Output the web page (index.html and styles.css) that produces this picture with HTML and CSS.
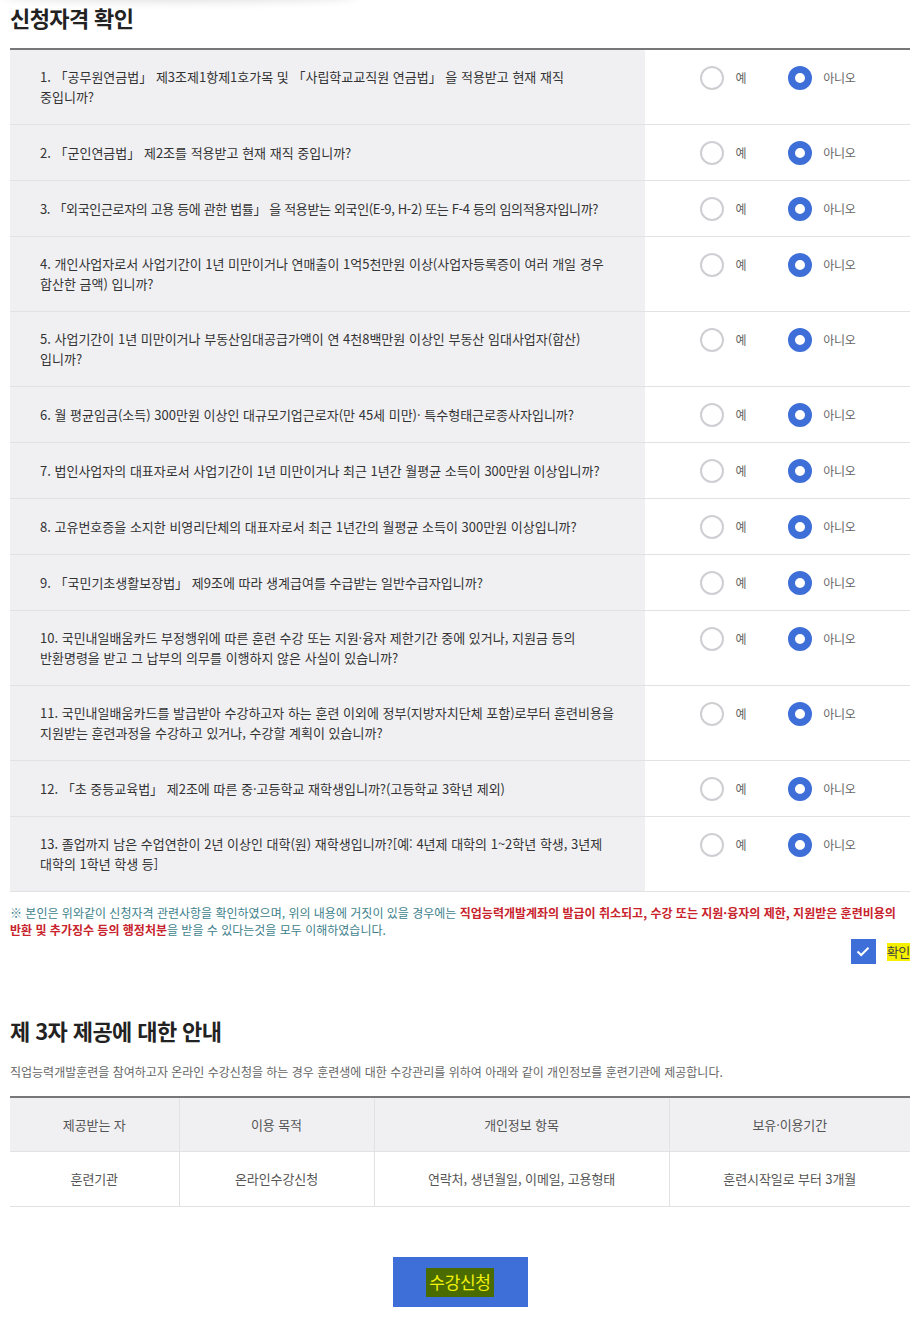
FILE: index.html
```html
<!DOCTYPE html>
<html lang="ko">
<head>
<meta charset="utf-8">
<link rel="stylesheet" href="styles.css">
</head>
<body>
<div class="page">
  <div class="topshadow"></div>
  <h2 class="title">신청자격 확인</h2>
  <div class="qtable">
    <div class="qrow"><div class="q">1. 「공무원연금법」 제3조제1항제1호가목 및 「사립학교교직원 연금법」 을 적용받고 현재 재직 중입니까?</div><div class="a"><span class="radio"></span><span class="lbl">예</span><span class="radio on"></span><span class="lbl">아니오</span></div></div>
    <div class="qrow"><div class="q">2. 「군인연금법」 제2조를 적용받고 현재 재직 중입니까?</div><div class="a"><span class="radio"></span><span class="lbl">예</span><span class="radio on"></span><span class="lbl">아니오</span></div></div>
    <div class="qrow"><div class="q tight">3. 「외국인근로자의 고용 등에 관한 법률」 을 적용받는 외국인(E-9, H-2) 또는 F-4 등의 임의적용자입니까?</div><div class="a"><span class="radio"></span><span class="lbl">예</span><span class="radio on"></span><span class="lbl">아니오</span></div></div>
    <div class="qrow"><div class="q">4. 개인사업자로서 사업기간이 1년 미만이거나 연매출이 1억5천만원 이상(사업자등록증이 여러 개일 경우 합산한 금액) 입니까?</div><div class="a"><span class="radio"></span><span class="lbl">예</span><span class="radio on"></span><span class="lbl">아니오</span></div></div>
    <div class="qrow"><div class="q">5. 사업기간이 1년 미만이거나 부동산임대공급가액이 연 4천8백만원 이상인 부동산 임대사업자(합산) 입니까?</div><div class="a"><span class="radio"></span><span class="lbl">예</span><span class="radio on"></span><span class="lbl">아니오</span></div></div>
    <div class="qrow"><div class="q">6. 월 평균임금(소득) 300만원 이상인 대규모기업근로자(만 45세 미만)· 특수형태근로종사자입니까?</div><div class="a"><span class="radio"></span><span class="lbl">예</span><span class="radio on"></span><span class="lbl">아니오</span></div></div>
    <div class="qrow"><div class="q">7. 법인사업자의 대표자로서 사업기간이 1년 미만이거나 최근 1년간 월평균 소득이 300만원 이상입니까?</div><div class="a"><span class="radio"></span><span class="lbl">예</span><span class="radio on"></span><span class="lbl">아니오</span></div></div>
    <div class="qrow"><div class="q">8. 고유번호증을 소지한 비영리단체의 대표자로서 최근 1년간의 월평균 소득이 300만원 이상입니까?</div><div class="a"><span class="radio"></span><span class="lbl">예</span><span class="radio on"></span><span class="lbl">아니오</span></div></div>
    <div class="qrow"><div class="q">9. 「국민기초생활보장법」 제9조에 따라 생계급여를 수급받는 일반수급자입니까?</div><div class="a"><span class="radio"></span><span class="lbl">예</span><span class="radio on"></span><span class="lbl">아니오</span></div></div>
    <div class="qrow"><div class="q">10. 국민내일배움카드 부정행위에 따른 훈련 수강 또는 지원·융자 제한기간 중에 있거나, 지원금 등의 반환명령을 받고 그 납부의 의무를 이행하지 않은 사실이 있습니까?</div><div class="a"><span class="radio"></span><span class="lbl">예</span><span class="radio on"></span><span class="lbl">아니오</span></div></div>
    <div class="qrow"><div class="q">11. 국민내일배움카드를 발급받아 수강하고자 하는 훈련 이외에 정부(지방자치단체 포함)로부터 훈련비용을 지원받는 훈련과정을 수강하고 있거나, 수강할 계획이 있습니까?</div><div class="a"><span class="radio"></span><span class="lbl">예</span><span class="radio on"></span><span class="lbl">아니오</span></div></div>
    <div class="qrow"><div class="q">12. 「초 중등교육법」 제2조에 따른 중·고등학교 재학생입니까?(고등학교 3학년 제외)</div><div class="a"><span class="radio"></span><span class="lbl">예</span><span class="radio on"></span><span class="lbl">아니오</span></div></div>
    <div class="qrow"><div class="q">13. 졸업까지 남은 수업연한이 2년 이상인 대학(원) 재학생입니까?[예: 4년제 대학의 1~2학년 학생, 3년제 대학의 1학년 학생 등]</div><div class="a"><span class="radio"></span><span class="lbl">예</span><span class="radio on"></span><span class="lbl">아니오</span></div></div>
  </div>
  <p class="notice">※ 본인은 위와같이 신청자격 관련사항을 확인하였으며, 위의 내용에 거짓이 있을 경우에는 <b>직업능력개발계좌의 발급이 취소되고, 수강 또는 지원·융자의 제한, 지원받은 훈련비용의 반환 및 추가징수 등의 행정처분</b>을 받을 수 있다는것을 모두 이해하였습니다.</p>
  <div class="confirm">
    <span class="check"><svg width="14" height="11" viewBox="0 0 14 11"><path d="M1.5 5.5 L5.2 9 L12.5 1.8" fill="none" stroke="#fff" stroke-width="2"/></svg></span>
    <span class="confirm-lbl">확인</span>
  </div>

  <h2 class="title title2">제 3자 제공에 대한 안내</h2>
  <p class="desc">직업능력개발훈련을 참여하고자 온라인 수강신청을 하는 경우 훈련생에 대한 수강관리를 위하여 아래와 같이 개인정보를 훈련기관에 제공합니다.</p>
  <table class="ptable">
    <colgroup><col class="c1"><col class="c2"><col class="c3"><col class="c4"></colgroup>
    <thead><tr><th>제공받는 자</th><th>이용 목적</th><th>개인정보 항목</th><th>보유·이용기간</th></tr></thead>
    <tbody><tr><td>훈련기관</td><td>온라인수강신청</td><td>연락처, 생년월일, 이메일, 고용형태</td><td>훈련시작일로 부터 3개월</td></tr></tbody>
  </table>
  <div class="btnwrap"><button class="submit"><span class="hl">수강신청</span></button></div>
</div>
</body>
</html>
```

FILE: styles.css
```css
* { box-sizing: border-box; }
html, body { margin: 0; padding: 0; background: #fff; }
body {
  font-family: "Noto Sans CJK KR", "Noto Sans", sans-serif;
  color: #333;
  word-break: keep-all;
}
.page {
  position: relative;
  padding: 0 9px 0 10px;
  width: 919px;
}
.topshadow {
  position: absolute;
  left: 0; top: -14px;
  width: 360px; height: 14px;
  border-radius: 50%;
  box-shadow: 0 2px 10px rgba(0,0,0,0.12);
}
.title {
  margin: 0;
  padding-top: 3px;
  height: 48px;
  font-size: 22px;
  font-weight: 700;
  letter-spacing: -0.6px;
  color: #222;
  line-height: 28px;
}
.qtable {
  border-top: 2px solid #777;
}
.qrow {
  display: flex;
  border-bottom: 1px solid #e2e2e2;
}
.qrow .q {
  width: 635px;
  background: #f0f0f3;
  padding: 17px 26px 17px 30px;
  font-size: 13px;
  line-height: 20px;
  letter-spacing: 0;
  color: #333;
  min-height: 55px;
  display: flex;
  align-items: center;
}
.qrow .q.tight { letter-spacing: -0.35px; }
.qrow .a {
  flex: 1;
  display: flex;
  align-items: flex-start;
  justify-content: center;
  padding-top: 16px;
}
.radio {
  width: 24px; height: 24px;
  border-radius: 50%;
  border: 2.5px solid #cfcfd3;
  flex: none;
}
.radio.on {
  border: 7px solid #3e6fd9;
  background: #fff;
}
.lbl {
  font-size: 12px;
  color: #666;
  line-height: 24px;
  margin-left: 12px;
  margin-right: 42px;
  letter-spacing: -0.3px;
}
.lbl:last-child { margin-right: 0; margin-left: 11px; }
.notice {
  margin: 0;
  padding-top: 12px;
  font-size: 12px;
  line-height: 17px;
  letter-spacing: 0;
  color: #3d7f8b;
}
.notice b { color: #c8232c; font-weight: 700; }
.confirm {
  display: flex;
  justify-content: flex-end;
  align-items: center;
  margin-top: 1px;
}
.check {
  width: 25px; height: 25px;
  background: #3e6fd9;
  display: flex;
  align-items: center;
  justify-content: center;
}
.confirm-lbl {
  margin-left: 11px;
  font-size: 13px;
  background: #f5f000;
  color: #444;
  line-height: 18px;
  letter-spacing: -0.3px;
}
.title2 {
  margin-top: 52px;
  height: auto;
  padding-top: 0;
}
.desc {
  margin: 19px 0 0;
  font-size: 12px;
  color: #666;
  letter-spacing: 0;
  line-height: 18px;
}
.ptable {
  margin-top: 15px;
  width: 900px;
  border-collapse: collapse;
  border-top: 2px solid #777;
  font-size: 13px;
  letter-spacing: -0.1px;
  color: #555;
}
.c1 { width: 169px; } .c2 { width: 195px; } .c3 { width: 295px; } .c4 { width: 241px; }
.ptable th, .ptable td {
  height: 55px;
  text-align: center;
  font-weight: 400;
  border-bottom: 1px solid #e2e2e2;
  border-left: 1px solid #e2e2e2;
  padding: 0;
}
.ptable th:first-child, .ptable td:first-child { border-left: none; }
.ptable th { background: #f0f0f3; color: #555; height: 54px; }
.btnwrap {
  display: flex;
  justify-content: center;
  padding-top: 50px;
  padding-bottom: 14px;
}
.submit {
  width: 135px; height: 50px;
  border: none;
  background: #3e6fd9;
  font-family: inherit;
  font-size: 17px;
  padding: 0;
}
.hl {
  background: #4a6b00;
  color: #f2f20a;
  padding: 1px 3px 3px;
  letter-spacing: -0.3px;
}
```
